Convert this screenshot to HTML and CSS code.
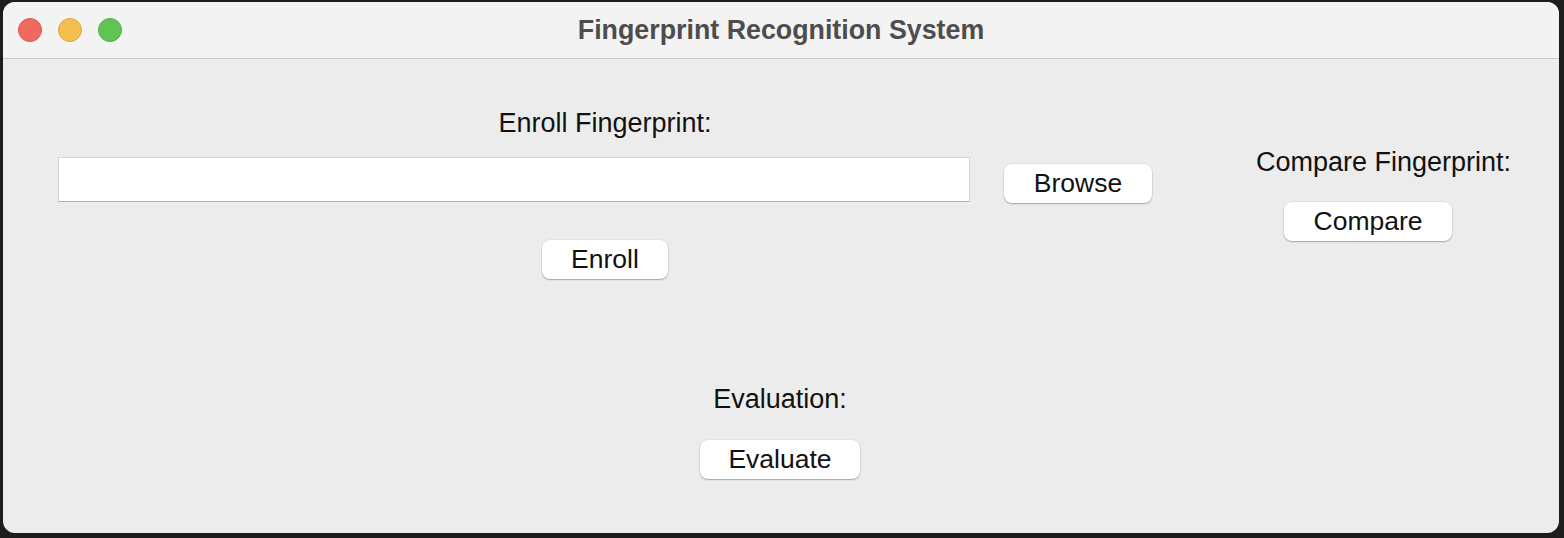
FILE: index.html
```html
<!DOCTYPE html>
<html>
<head>
<meta charset="utf-8">
<link rel="stylesheet" href="styles.css">
</head>
<body>
<div class="window">
  <div class="titlebar">
    <div class="lights">
      <span class="light red"></span>
      <span class="light yellow"></span>
      <span class="light green"></span>
    </div>
    <div class="title">Fingerprint Recognition System</div>
    <div></div>
  </div>
  <div class="content">
    <div class="top">
      <div class="enroll">
        <div class="label">Enroll Fingerprint:</div>
        <div class="entry-row">
          <div class="entry"></div>
          <div class="btn btn-browse">Browse</div>
        </div>
        <div class="btn btn-enroll">Enroll</div>
      </div>
      <div class="compare">
        <div class="label">Compare Fingerprint:</div>
        <div class="btn btn-compare">Compare</div>
      </div>
    </div>
    <div class="eval">
      <div class="label">Evaluation:</div>
      <div class="btn btn-evaluate">Evaluate</div>
    </div>
  </div>
</div>
</body>
</html>
```
FILE: styles.css
```css
html, body {
  margin: 0;
  padding: 0;
}
body {
  background: #1d1d1d;
  width: 1564px;
  height: 538px;
  overflow: hidden;
  font-family: "Liberation Sans", Arial, sans-serif;
}
.window {
  margin: 2px 0 0 3px;
  width: 1556px;
  height: 531px;
  background: #ececec;
  border-radius: 12px;
  overflow: hidden;
}
.titlebar {
  height: 56px;
  background: #f3f3f3;
  border-bottom: 1px solid #c8c8c8;
  display: grid;
  grid-template-columns: 1fr auto 1fr;
  align-items: center;
}
.lights {
  display: flex;
  gap: 16px;
  padding-left: 15px;
}
.light {
  width: 24px;
  height: 24px;
  border-radius: 50%;
  box-sizing: border-box;
}
.red { background: #ee6a5f; border: 1px solid #d9574c; }
.yellow { background: #f5bf4f; border: 1px solid #dea53b; }
.green { background: #61c554; border: 1px solid #52ad45; }
.title {
  font-weight: bold;
  font-size: 26.8px;
  color: #4d4d4d;
  line-height: 32px;
  padding-bottom: 1px;
}
.content {
  display: flex;
  flex-direction: column;
}
.top {
  display: grid;
  grid-template-columns: 1094px 1fr;
  padding-left: 55px;
}
.label {
  font-size: 27px;
  line-height: 32px;
  color: #111;
  white-space: nowrap;
}
.enroll {
  display: flex;
  flex-direction: column;
  align-items: center;
  padding-top: 48px;
}
.entry-row {
  display: flex;
  align-items: flex-start;
  gap: 34px;
  margin-top: 18px;
  width: 1094px;
}
.entry {
  width: 912px;
  height: 45px;
  box-sizing: border-box;
  background: #fff;
  border: 1px solid #d6d6d6;
  border-bottom-color: #b2b2b2;
}
.btn {
  height: 39px;
  box-sizing: border-box;
  background: #fff;
  border-radius: 8px;
  box-shadow: 0 1px 1.5px rgba(0,0,0,0.28), 0 0 0 0.5px rgba(0,0,0,0.08);
  font-size: 26.5px;
  color: #111;
  display: flex;
  align-items: center;
  justify-content: center;
  line-height: 1;
}
.btn-browse { width: 148px; margin-top: 7px; }
.btn-enroll { width: 126px; margin-top: 37px; }
.compare {
  display: flex;
  flex-direction: column;
  align-items: flex-start;
  padding-top: 87px;
  padding-left: 104px;
}
.btn-compare { width: 168px; margin-top: 24px; margin-left: 28px; }
.eval {
  display: flex;
  flex-direction: column;
  align-items: center;
  margin-top: 104px;
  padding-right: 2px;
}
.btn-evaluate { width: 160px; margin-top: 25px; }
```
